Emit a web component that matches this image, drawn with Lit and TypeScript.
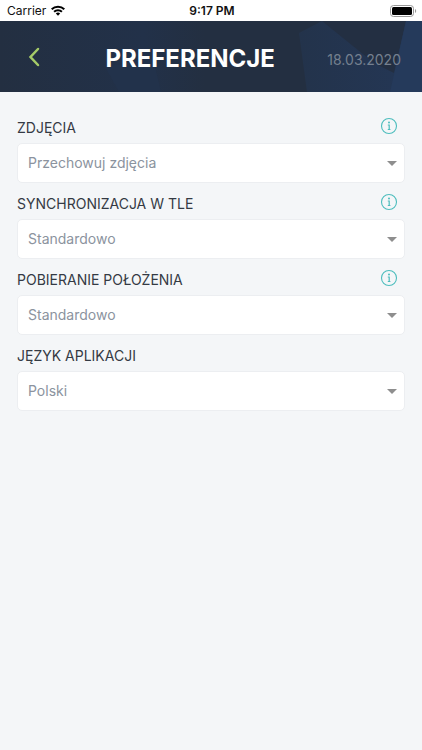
import { LitElement, html, css, nothing } from "lit";
import { customElement, property } from "lit/decorators.js";

@customElement("status-bar")
class StatusBar extends LitElement {
  static styles = css`
    :host {
      display: grid;
      grid-template-columns: 1fr auto 1fr;
      align-items: center;
      height: 21px;
      padding: 0 5px 0 7px;
      background: #fff;
      color: #111;
      font-size: 12px;
      line-height: 21px;
    }
    .carrier {
      display: flex;
      align-items: center;
      gap: 5px;
    }
    .time {
      font-weight: 600;
    }
    .battery {
      justify-self: end;
    }
    svg {
      display: block;
    }
  `;
  render() {
    return html`
      <div class="carrier">
        <span>Carrier</span>
        <svg width="14" height="11" viewBox="0 0 14 11" aria-hidden="true">
          <g fill="none" stroke="#000" stroke-width="2">
            <path d="M.7 4.3a8.9 8.9 0 0 1 12.6 0" />
            <path d="M3.1 6.8a5.5 5.5 0 0 1 7.8 0" />
          </g>
          <path d="M7 10.8 4.8 8.5a3.1 3.1 0 0 1 4.4 0Z" />
        </svg>
      </div>
      <span class="time">9:17 PM</span>
      <svg class="battery" width="27" height="12" viewBox="0 0 27 12" aria-hidden="true">
        <rect x=".5" y=".5" width="23" height="11" rx="3" fill="#fff" stroke="#999" />
        <rect x="2" y="2" width="20" height="8" rx="1.5" />
        <path d="M25 4c1.6.5 1.6 3.5 0 4Z" fill="#999" />
      </svg>
    `;
  }
}

@customElement("page-header")
class PageHeader extends LitElement {
  static styles = css`
    :host {
      display: block;
      position: relative;
      background: #232f41;
    }
    .facets {
      position: absolute;
      inset: 0;
      width: 100%;
      height: 100%;
    }
    .bar {
      position: relative;
      display: grid;
      grid-template-columns: 32px 1fr auto;
      align-items: center;
      height: 71px;
      padding: 0 21px;
      color: #fff;
    }
    .back {
      width: 25px;
      height: 40px;
      padding: 0;
      border: 0;
      background: none;
      cursor: pointer;
    }
    .back svg {
      display: block;
      margin: auto;
    }
    h1 {
      margin: 0;
      font-size: 24px;
      line-height: 32px;
      font-weight: 700;
      text-align: center;
      white-space: nowrap;
      padding-top: 4px;
    }
    time {
      padding-top: 6px;
      color: #75808f;
      font-size: 14px;
      line-height: 20px;
    }
  `;
  render() {
    return html`
      <svg class="facets" viewBox="0 0 422 71" preserveAspectRatio="none" aria-hidden="true">
        <defs>
          <linearGradient id="left" x1="0" x2="1">
            <stop offset="0" stop-color="#232f41" />
            <stop offset=".7" stop-color="#223149" />
            <stop offset="1" stop-color="#232f41" />
          </linearGradient>
          <linearGradient id="right" x1="0" x2="1">
            <stop offset="0" stop-color="#23334b" />
            <stop offset="1" stop-color="#243756" />
          </linearGradient>
        </defs>
        <path fill="url(#left)" d="M0 0h205v71H0Z" />
        <path fill="#22324b" d="M104 44c16 4 45-14 50-4l7 31h-42Z" />
        <path fill="url(#right)" d="M307 71 299 12 322 0h100v71Z" />
        <path fill="#232f42" d="M322 0h84l-12 52-20-10Z" />
        <path fill="#253a5b" d="M406 0h16v71h-32Z" />
      </svg>
      <div class="bar">
        <button class="back" type="button" aria-label="Wstecz">
          <svg width="12" height="20" viewBox="0 0 12 20">
            <path d="M10 2 2.5 10l7.5 8" fill="none" stroke="#a5cb68" stroke-width="2.5" stroke-linecap="round" />
          </svg>
        </button>
        <h1>PREFERENCJE</h1>
        <time datetime="2020-03-18">18.03.2020</time>
      </div>
    `;
  }
}

@customElement("preference-field")
class PreferenceField extends LitElement {
  @property() label = "";
  @property() value = "";
  @property({ type: Boolean }) info = false;

  static styles = css`
    :host {
      display: block;
    }
    .head {
      display: flex;
      align-items: center;
      justify-content: space-between;
      box-sizing: border-box;
      height: 36px;
      padding: 2px 7px 0 0;
    }
    label {
      padding-top: 4px;
      color: #343a44;
      font-size: 14px;
      line-height: 20px;
    }
    .info {
      width: 18px;
      height: 18px;
      padding: 0;
      border: 0;
      background: none;
      cursor: pointer;
    }
    svg {
      display: block;
    }
    .box {
      display: grid;
      grid-template-columns: 1fr auto;
      align-items: center;
    }
    select {
      grid-area: 1 / 1 / 2 / 3;
      appearance: none;
      width: 100%;
      height: 40px;
      padding: 0 32px 2px 10px;
      border: 1px solid #eceef1;
      border-radius: 5px;
      background: #fff;
      color: #8b939e;
      font: inherit;
      font-size: 14px;
    }
    .arrow {
      grid-area: 1 / 2;
      margin-right: 8px;
      pointer-events: none;
      z-index: 1;
    }
  `;
  render() {
    return html`
      <div class="head">
        <label for="choice">${this.label}</label>
        ${this.info
          ? html`<button class="info" type="button" aria-label="Informacje: ${this.label}">
              <svg width="18" height="18" viewBox="0 0 18 18">
                <circle cx="9" cy="9" r="7.5" fill="none" stroke="#4dbdbd" stroke-width="1.1" />
                <circle cx="9" cy="5.6" r="1" fill="#4dbdbd" />
                <path d="M7.8 8H9.2v4.4M7.8 12.5h2.6" fill="none" stroke="#4dbdbd" stroke-width="1.2" />
              </svg>
            </button>`
          : nothing}
      </div>
      <div class="box">
        <select id="choice">
          <option>${this.value}</option>
        </select>
        <svg class="arrow" width="10" height="5" viewBox="0 0 10 5" aria-hidden="true">
          <path d="M0 0h10L5 5Z" fill="#8e8e8e" />
        </svg>
      </div>
    `;
  }
}

@customElement("app-root")
class AppRoot extends LitElement {
  static styles = css`
    :host {
      display: block;
      min-height: 100vh;
      background: #f4f6f8;
      font-family: Inter, Roboto, "Liberation Sans", sans-serif;
    }
    main {
      padding: 15px 17px;
    }
  `;
  private fields = [
    { label: "ZDJĘCIA", value: "Przechowuj zdjęcia", info: true },
    { label: "SYNCHRONIZACJA W TLE", value: "Standardowo", info: true },
    { label: "POBIERANIE POŁOŻENIA", value: "Standardowo", info: true },
    { label: "JĘZYK APLIKACJI", value: "Polski", info: false },
  ];
  render() {
    return html`
      <status-bar></status-bar>
      <page-header></page-header>
      <main>
        ${this.fields.map(
          (f) => html`<preference-field .label=${f.label} .value=${f.value} .info=${f.info}></preference-field>`
        )}
      </main>
    `;
  }
}
